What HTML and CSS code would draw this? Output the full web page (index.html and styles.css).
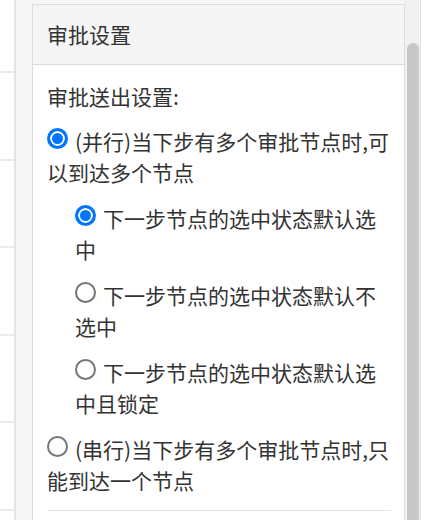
FILE: index.html
```html
<!DOCTYPE html>
<html lang="zh-CN">
<head>
<meta charset="utf-8">
<title>审批设置</title>
<link rel="stylesheet" href="styles.css">
</head>
<body>
<div class="app">
  <div class="list">
    <div class="row row-first"></div>
    <div class="row"></div>
    <div class="row"></div>
    <div class="row"></div>
    <div class="row"></div>
    <div class="row"></div>
  </div>
  <div class="gutter"></div>
  <div class="main">
    <div class="panel">
      <div class="panel-head">审批设置</div>
      <div class="panel-body">
        <div class="label">审批送出设置:</div>
        <label class="opt"><input class="radio" type="radio" name="mode" checked>(并行)当下步有多个审批节点时,可以到达多个节点</label>
        <div class="sub">
          <label class="opt"><input class="radio" type="radio" name="state" checked>下一步节点的选中状态默认选中</label>
          <label class="opt"><input class="radio" type="radio" name="state">下一步节点的选中状态默认不选中</label>
          <label class="opt"><input class="radio" type="radio" name="state">下一步节点的选中状态默认选中且锁定</label>
        </div>
        <label class="opt"><input class="radio" type="radio" name="mode">(串行)当下步有多个审批节点时,只能到达一个节点</label>
        <div class="divider"></div>
      </div>
    </div>
  </div>
  <div class="scrollbar"><div class="thumb"></div></div>
  <div class="edge"></div>
</div>
</body>
</html>
```
FILE: styles.css
```css
html, body {
  margin: 0;
  padding: 0;
  background: #ffffff;
}
.app {
  display: flex;
  width: 432px;
  height: 520px;
  overflow: hidden;
  font-family: "Microsoft YaHei", "Noto Sans CJK SC", sans-serif;
  font-size: 21px;
  color: #333333;
}
.list {
  width: 14px;
  flex: none;
  background: #ffffff;
  display: flex;
  flex-direction: column;
}
.row {
  flex: none;
  height: 85.6px;
  border-bottom: 2px solid #ebebeb;
}
.row-first {
  height: 71px;
}
.gutter {
  width: 2px;
  flex: none;
  background: #e2e4e8;
}
.main {
  width: 389px;
  flex: none;
  box-sizing: border-box;
  background: #f6f6f6;
  padding: 4px 0 0 16px;
}
.panel {
  width: 373px;
  box-sizing: border-box;
  border: 1px solid #dcdcdc;
  border-bottom: none;
  background: #ffffff;
  height: 600px;
}
.panel-head {
  height: 60px;
  box-sizing: border-box;
  background: #f5f5f5;
  border-bottom: 1px solid #dcdcdc;
  padding-left: 14px;
  display: flex;
  align-items: center;
  line-height: 31px;
}
.panel-body {
  padding: 16px 13px 0 14px;
  line-height: 31px;
}
.label {
  display: block;
}
.opt {
  display: block;
  margin-top: 15px;
}
.label + .opt {
  margin-top: 14px;
}
.sub {
  padding-left: 28px;
}
.radio {
  -webkit-appearance: none;
  appearance: none;
  display: inline-block;
  box-sizing: border-box;
  width: 21px;
  height: 21px;
  padding: 0;
  margin: 0 7px 0 0;
  vertical-align: 1px;
  border-radius: 50%;
  border: 2px solid #767676;
  background: #ffffff;
}
.radio:checked {
  border: 3px solid #0075ff;
  background: #0075ff;
  box-shadow: inset 0 0 0 2px #ffffff;
}
.divider {
  margin-top: 14px;
  height: 1px;
  background: #e4e4e4;
}
.scrollbar {
  width: 15px;
  flex: none;
  background: #f1f1f1;
  border-right: 1px solid #dddddd;
  display: flex;
  justify-content: center;
  padding-top: 43px;
}
.thumb {
  width: 12px;
  height: 600px;
  background: #c8c8c8;
  border-radius: 6px 6px 0 0;
}
.edge {
  flex: 1;
  background: #ffffff;
}
```
